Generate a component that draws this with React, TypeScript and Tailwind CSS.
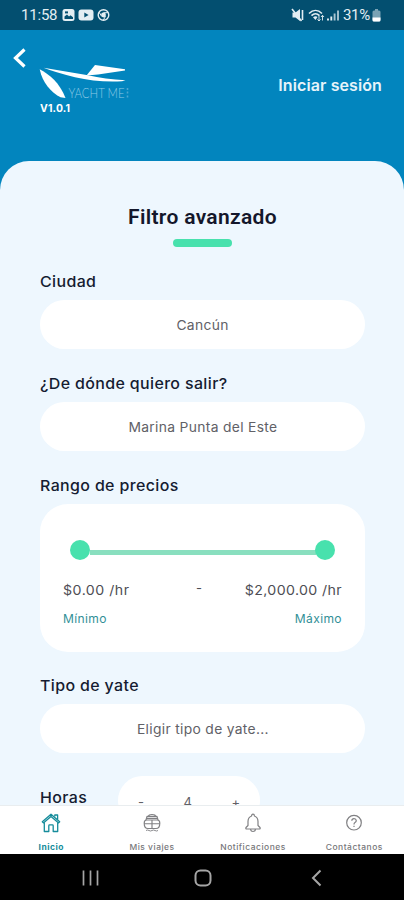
import type { ReactNode } from "react";

const fontBody = "font-['Inter','Liberation_Sans',sans-serif]";
const fontSystem = "font-['Roboto','Liberation_Sans',sans-serif]";

function StatusBar() {
  return (
    <div className={`flex h-[30px] shrink-0 items-center bg-[#034f70] pl-[21px] pr-[23px] text-[#e3eef3] ${fontSystem}`}>
      <span className="text-[15px] leading-[30px] tracking-[-0.2px]">11:58</span>
      <svg className="ml-[5px]" width="50" height="14" viewBox="0 0 50 14" fill="none">
        <rect x="0.5" y="1" width="12" height="12" rx="2.5" fill="#e3eef3" />
        <path d="M2.5 11V8.5l2.5-2 2 2 1.5-1.2 2.5 2V11z" fill="#034f70" />
        <rect x="3" y="3.4" width="3" height="2" fill="#034f70" />
        <rect x="16.5" y="1.5" width="15" height="11" rx="3" fill="#e3eef3" />
        <path d="M22.3 4.5v5l4.3-2.5z" fill="#034f70" />
        <circle cx="41.5" cy="7" r="5.3" stroke="#e3eef3" strokeWidth="1.4" />
        <circle cx="41.5" cy="7" r="2.4" fill="#e3eef3" />
        <path d="M41.5 4.7h4.5M39.5 8.2l-2.3-3.9M43.5 8.2l-2.2 4" stroke="#e3eef3" />
      </svg>
      <div className="ml-auto flex items-center">
        <svg width="50" height="16" viewBox="0 0 50 16" fill="none">
          <path d="M1.500 5.500h3L9 2v12l-4.500-3.500h-3z" fill="#e3eef3" />
          <path d="M1 2l9.500 12M11.500 3v10" stroke="#e3eef3" strokeWidth="1.600" />
          <path d="M18 6.500c4-4 9-4 13 0M20.500 8.700c2.500-2.400 5.500-2.400 8 0" stroke="#e3eef3" strokeWidth="1.600" />
          <path d="M22 10.200c1.500-1.200 3.500-1.200 4.500-.3L24.500 13z" fill="#e3eef3" />
          <path d="M28 9v5m-1.500-1.700L28 14l1.500-1.700M31.500 13.500v-5M30 10l1.500-1.700L33 10" stroke="#e3eef3" strokeWidth="0.900" />
          <path d="M37 13.500v-2M40.300 13.500V9.500" stroke="#e3eef3" strokeWidth="1.900" />
          <path d="M43.600 13.500V6.500M47 13.500V3.500" stroke="#a9c5d1" strokeWidth="1.900" />
        </svg>
        <span className="ml-[2px] text-[15px] leading-[30px] tracking-[-0.25px]">31%</span>
        <svg className="ml-[2px]" width="9" height="14" viewBox="0 0 9 14">
          <path d="M3 1h3v1.500h1q1.500 0 1.500 1.500v8q0 1.500-1.500 1.500H2Q.5 13.500.5 12V4Q.5 2.500 2 2.500h1z" fill="#79a2b4" />
          <path d="M.5 9.500h8V12q0 1.500-1.500 1.500H2Q.5 13.500.5 12z" fill="#fff" />
        </svg>
      </div>
    </div>
  );
}

function Header() {
  return (
    <header className="flex h-[131px] shrink-0 text-white">
      <svg className="ml-[13px] mt-[18px]" width="14" height="21" viewBox="0 0 14 21" fill="none">
        <path d="M11.500 1.500L2.500 10l9 8.500" stroke="#fff" strokeWidth="3.200" />
      </svg>
      <div className="ml-[12px] mt-[33px] w-[94px]">
        <div className="flex h-[37px]">
          <svg className="shrink-0" width="94" height="37" viewBox="0 0 94 37" fill="none">
            <path d="M.7 6.200C10 11 21 20 26.500 35L21.500 34.300C12 29 3.500 20 .7 6.200z" fill="#fff" />
            <path d="M4.500 4.800L49 12.200Q66 16.300 86.500 17.200L83 18.300Q58 19.500 36 14.300 15 9 4.500 4.800z" fill="#fff" />
            <path d="M47.500 12.500L56 2l30 4.200v1.200L59 11.500z" fill="#fff" />
            <text x="29.500" y="34.500" textLength="56" lengthAdjust="spacingAndGlyphs" fill="#8fcae5" fontFamily="Lato, sans-serif" fontWeight="300" fontSize="12.800">YACHT ME</text>
            <path d="M88.500 25v2m0 1.500v2m0 2v2" stroke="#4da7d1" strokeWidth="1.600" />
          </svg>
        </div>
        <div className={`mt-px w-max origin-left scale-x-[1.04] pl-px text-[10px] font-bold leading-[14px] tracking-[0.15px] ${fontBody}`}>V1.0.1</div>
      </div>
      <a className={`ml-auto mr-[22px] mt-[43px] text-[16px] font-semibold leading-[24px] tracking-[0.1px] text-[#e7f4fa] ${fontBody}`}>Iniciar sesión</a>
    </header>
  );
}

function Label({ children }: { children: ReactNode }) {
  return <span className="block h-5 w-max origin-left scale-x-[1.063] whitespace-nowrap text-[15px] font-medium leading-5 tracking-[0.35px] text-[#151c31]">{children}</span>;
}

function Field({ children }: { children: ReactNode }) {
  return (
    <div className="mt-2 flex h-[49px] items-center justify-center rounded-full bg-white pt-[2px] text-[13px] tracking-[0.3px] text-[#616167]">
      <span className="scale-x-[1.065]">{children}</span>
    </div>
  );
}

function PriceRange() {
  return (
    <div className="mt-2 h-[148px] rounded-[28px] bg-white px-[23px] pt-[36px]">
      <div className="mx-[7px] flex h-5 items-center">
        <i className="size-5 shrink-0 rounded-full bg-[#48e1ad]" />
        <i className="mt-[4px] h-[5px] grow bg-[#89dfbf]" />
        <i className="-ml-px size-5 shrink-0 rounded-full bg-[#48e1ad]" />
      </div>
      <div className="mt-[20px] flex h-5 items-center justify-between text-[13px] leading-5 text-[#4d4d54]">
        <span className="w-[97px] origin-left scale-x-[1.09] tracking-[0.45px]">$0.00 /hr</span>
        <span className="ml-[16px] -mt-1">-</span>
        <span className="w-[120px] origin-right scale-x-[1.09] text-right tracking-[0.35px]">$2,000.00 /hr</span>
      </div>
      <div className="mt-[11px] flex h-[18px] items-center justify-between text-[11.5px] tracking-[0.35px] text-[#329097]">
        <span className="origin-left scale-x-[1.05]">Mínimo</span>
        <span className="origin-right scale-x-[1.05]">Máximo</span>
      </div>
    </div>
  );
}

function HomeIcon() {
  return (
    <svg width="20" height="20" viewBox="0 0 20 20" fill="none" stroke="#168c9b" strokeWidth="1.300" strokeLinejoin="round">
      <path d="M1.300 8.700L10 1.200l8.700 7.500-1.100 1.200L10 3.600 2.400 9.900z" />
      <path d="M3.300 9.500v9h4.500v-5.800q0-.8.8-.8h2.800q.8 0 .8.800v5.800h4.500v-9M13.800 3.500V2h2.800v4.500" />
    </svg>
  );
}

function YachtIcon() {
  return (
    <svg width="20" height="20" viewBox="0 0 20 20" fill="none" stroke="#808083" strokeWidth="1.150" strokeLinejoin="round">
      <path d="M6.500 3.300Q6.500 1.500 10 1.500t3.500 1.800M4 7L5 3.400h10L16 7M5 5.300h10" />
      <path d="M4.500 7h11q2.300 0 2.300 3.200 0 5.300-3.800 5.300H6q-3.800 0-3.800-5.300Q2.200 7 4.500 7zM2.300 10.700h15.400M10 7v8.500" />
      <path d="M4 17.500q1.500-1 3 0t3 0 3 0 3 0" strokeWidth="0.900" />
    </svg>
  );
}

function BellIcon() {
  return (
    <svg width="20" height="20" viewBox="0 0 20 20" fill="none" stroke="#808083" strokeWidth="1.200" strokeLinejoin="round">
      <path d="M8.600 3q0-1.800 1.400-1.800T11.400 3Q15 4.200 15 8.500v4l2 2q.6 1.500-.8 1.500H3.800Q2.400 16 3 14.500l2-2v-4Q5 4.200 8.600 3zM7.500 16.500q.5 2 2.500 2t2.500-2" />
    </svg>
  );
}

function HelpIcon() {
  return (
    <svg width="20" height="20" viewBox="0 0 20 20" fill="none" stroke="#808083" strokeWidth="1.200">
      <circle cx="10" cy="9.700" r="7.300" />
      <path d="M7.800 7.800Q7.900 5.600 10 5.600t2.300 2q0 1.200-1.300 1.900-1 .6-1 1.900M10 12.700v1.400" />
    </svg>
  );
}

function Tab({ icon, children }: { icon: ReactNode; children: ReactNode }) {
  return (
    <div className="flex w-[101px] flex-col items-center pl-px pt-[7px]">
      {icon}
      <span className="mt-[10px] scale-x-[1.13] whitespace-nowrap text-[7.5px] font-medium leading-[10px] tracking-[0.45px]">{children}</span>
    </div>
  );
}

export default function App() {
  return (
    <div className="flex h-[900px] w-[404px] flex-col overflow-hidden bg-[#0285be]">
      <StatusBar />
      <Header />
      <main className={`h-[644px] shrink-0 overflow-hidden rounded-t-[29px] bg-[#eef7fe] pl-10 pr-[39px] ${fontBody}`}>
        <h1 className={`mt-[42px] text-center text-[21px] font-semibold leading-7 tracking-[0.33px] text-[#14172b] ${fontSystem}`}>Filtro avanzado</h1>
        <div className="mx-auto mt-[8px] h-[8px] w-[59px] rounded-full bg-[#48e1ad]" />
        <div className="mt-[25px]">
          <Label>Ciudad</Label>
          <Field>Cancún</Field>
        </div>
        <div className="mt-[25px]">
          <Label>¿De dónde quiero salir?</Label>
          <Field>Marina Punta del Este</Field>
        </div>
        <div className="mt-[25px]">
          <Label>Rango de precios</Label>
          <PriceRange />
        </div>
        <div className="mt-[24px]">
          <Label>Tipo de yate</Label>
          <Field>Eligir tipo de yate...</Field>
        </div>
        <div className="mt-[23px] flex">
          <div className="w-[78px] pt-[12px]">
            <Label>Horas</Label>
          </div>
          <div className="flex h-[49px] w-[142px] items-center justify-between rounded-full bg-white px-[20px] pt-[4px] text-[13px] text-[#616167]">
            <span>-</span>
            <span>4</span>
            <span>+</span>
          </div>
        </div>
      </main>
      <nav className={`flex h-[49px] shrink-0 border-t border-[#e9edef] bg-white text-[#77777a] ${fontBody}`}>
        <Tab icon={<HomeIcon />}><b className="font-bold text-[#168c9b]">Inicio</b></Tab>
        <Tab icon={<YachtIcon />}>Mis viajes</Tab>
        <Tab icon={<BellIcon />}>Notificaciones</Tab>
        <Tab icon={<HelpIcon />}>Contáctanos</Tab>
      </nav>
      <div className="flex h-[46px] shrink-0 items-center bg-black pl-[82px] pt-[2px]">
        <svg width="17" height="18" viewBox="0 0 17 18" stroke="#a6a6a6" strokeWidth="1.700">
          <path d="M1.500 1.500v15M8.500 1.500v15M15.500 1.500v15" />
        </svg>
        <svg className="ml-[95px]" width="18" height="18" viewBox="0 0 18 18" fill="none" stroke="#a6a6a6" strokeWidth="2">
          <rect x="1.500" y="1.500" width="15" height="15" rx="5" />
        </svg>
        <svg className="ml-[99px]" width="12" height="18" viewBox="0 0 12 18" fill="none" stroke="#a6a6a6" strokeWidth="2">
          <path d="M9.500 1.500L2 9l7.500 7.500" />
        </svg>
      </div>
    </div>
  );
}
